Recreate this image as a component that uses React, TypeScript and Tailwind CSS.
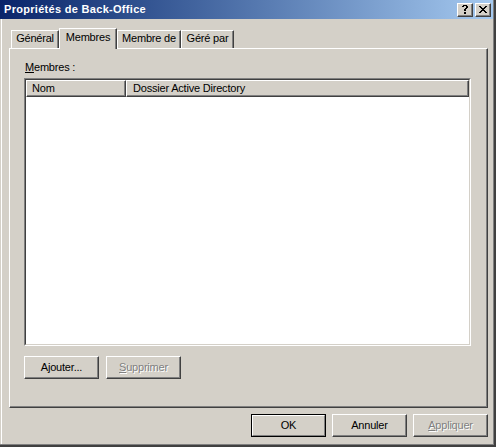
import React from "react";

function Pix({ rows }: { rows: string[] }) {
  const h = rows.length;
  const w = rows[0].length;
  const rects: React.ReactElement[] = [];
  rows.forEach((r, y) =>
    r.split("").forEach((c, x) => {
      if (c === "#") rects.push(<rect key={`${x}-${y}`} x={x} y={y} width={1} height={1} />);
    })
  );
  return (
    <svg width={w} height={h} viewBox={`0 0 ${w} ${h}`} shapeRendering="crispEdges" fill="#000">
      {rects}
    </svg>
  );
}

const HELP = [
  " #### ",
  "##  ##",
  "    ##",
  "   ## ",
  "  ##  ",
  "  ##  ",
  "      ",
  "  ##  ",
  "  ##  ",
];

const CLOSE = [
  "##    ##",
  " ##  ## ",
  "  ####  ",
  "   ##   ",
  "  ####  ",
  " ##  ## ",
  "##    ##",
];

function CaptionBtn({ rows }: { rows: string[] }) {
  return (
    <div className="w-[16px] h-[14px] bg-[#d4d0c8] border border-t-white border-l-white border-r-[#404040] border-b-[#404040] shadow-[inset_-1px_-1px_0_#808080] flex items-center justify-center pb-px">
      <Pix rows={rows} />
    </div>
  );
}

function Btn({
  children,
  disabled,
  def,
}: {
  children: React.ReactNode;
  disabled?: boolean;
  def?: boolean;
}) {
  const txt = disabled ? "text-[#808080] [text-shadow:1px_1px_0_#ffffff]" : "text-black";
  if (def) {
    return (
      <div className="w-[75px] h-[23px] border border-black">
        <div className={`w-full h-full border border-t-white border-l-white border-r-[#808080] border-b-[#808080] flex items-center justify-center ${txt}`}>
          {children}
        </div>
      </div>
    );
  }
  return (
    <div
      className={`w-[75px] h-[23px] border border-t-white border-l-white border-r-[#404040] border-b-[#404040] shadow-[inset_-1px_-1px_0_#808080] flex items-center justify-center ${txt}`}
    >
      {children}
    </div>
  );
}

function Tab({ label, w, selected }: { label: string; w: string; selected?: boolean }) {
  if (selected) {
    return (
      <div
        className={`${w} relative z-10 -mb-px h-[21px] bg-[#d4d0c8] border-t border-l border-t-white border-l-white border-r border-r-[#404040] shadow-[inset_-1px_0_0_#808080] flex justify-center pt-[2px]`}
      >
        {label}
      </div>
    );
  }
  return (
    <div
      className={`${w} h-[18px] bg-[#d4d0c8] border-t border-l border-t-white border-l-white border-r border-r-[#404040] shadow-[inset_-1px_0_0_#808080] flex justify-center pt-[1px]`}
    >
      {label}
    </div>
  );
}

function HeaderCell({ children, className }: { children: React.ReactNode; className: string }) {
  return (
    <div
      className={`${className} h-full bg-[#d4d0c8] border border-t-white border-l-white border-r-[#404040] border-b-[#404040] shadow-[inset_-1px_-1px_0_#808080] flex items-center`}
    >
      {children}
    </div>
  );
}

export default function App() {
  return (
    <div className="w-[496px] h-[447px] bg-[#d4d0c8] border-r-2 border-b-2 border-[#404040] flex flex-col font-['Liberation_Sans',Arial,sans-serif] text-[11px] leading-[13px] tracking-[-0.2px] text-black select-none">
      <div className="flex-1 flex flex-col border-r border-b border-[#808080]">
        {/* Title bar */}
        <div className="h-[19px] bg-linear-to-r from-[#0a246a] to-[#a6caf0] flex items-center pl-[4px] pr-[2px]">
          <span className="text-white font-bold text-[11px] tracking-[0.3px]">Propriétés de Back-Office</span>
          <div className="ml-auto flex gap-[2px]">
            <CaptionBtn rows={HELP} />
            <CaptionBtn rows={CLOSE} />
          </div>
        </div>

        {/* Body */}
        <div className="flex-1 ml-px border-l border-white pt-[9px] flex flex-col">
          {/* Tabs */}
          <div className="flex items-end ml-[7px] pl-[2px]">
            <Tab label="Général" w="w-[48px]" />
            <Tab label="Membres" w="w-[58px]" selected />
            <Tab label="Membre de" w="w-[64px]" />
            <Tab label="Géré par" w="w-[53px]" />
          </div>

          {/* Panel */}
          <div className="ml-[7px] w-[479px] h-[360px] border-t border-l border-t-white border-l-white border-r border-b border-r-[#404040] border-b-[#404040] shadow-[inset_-1px_-1px_0_#808080] flex flex-col">
            <div className="mt-[12px] ml-[15px]">
              <span className="underline underline-offset-[1px]">M</span>embres :
            </div>

            {/* List view */}
            <div className="mt-[4px] ml-[14px] w-[447px] h-[268px] border border-t-[#808080] border-l-[#808080] border-r-white border-b-white">
              <div className="w-full h-full border border-t-[#404040] border-l-[#404040] border-r-[#d4d0c8] border-b-[#d4d0c8] bg-white flex flex-col">
                <div className="h-[17px] flex">
                  <HeaderCell className="w-[100px] pl-[5px]">Nom</HeaderCell>
                  <HeaderCell className="flex-1 pl-[6px]">Dossier Active Directory</HeaderCell>
                </div>
              </div>
            </div>

            <div className="mt-[10px] ml-[14px] flex gap-[7px]">
              <Btn>
                A<span className="underline underline-offset-[1px]">j</span>outer...
              </Btn>
              <Btn disabled>
                <span className="underline underline-offset-[1px]">S</span>upprimer
              </Btn>
            </div>
          </div>

          {/* Bottom buttons */}
          <div className="mt-[6px] ml-[7px] w-[479px] flex justify-end gap-[6px]">
            <Btn def>OK</Btn>
            <Btn>Annuler</Btn>
            <Btn disabled>
              <span className="underline underline-offset-[1px]">A</span>ppliquer
            </Btn>
          </div>
        </div>
      </div>
    </div>
  );
}
